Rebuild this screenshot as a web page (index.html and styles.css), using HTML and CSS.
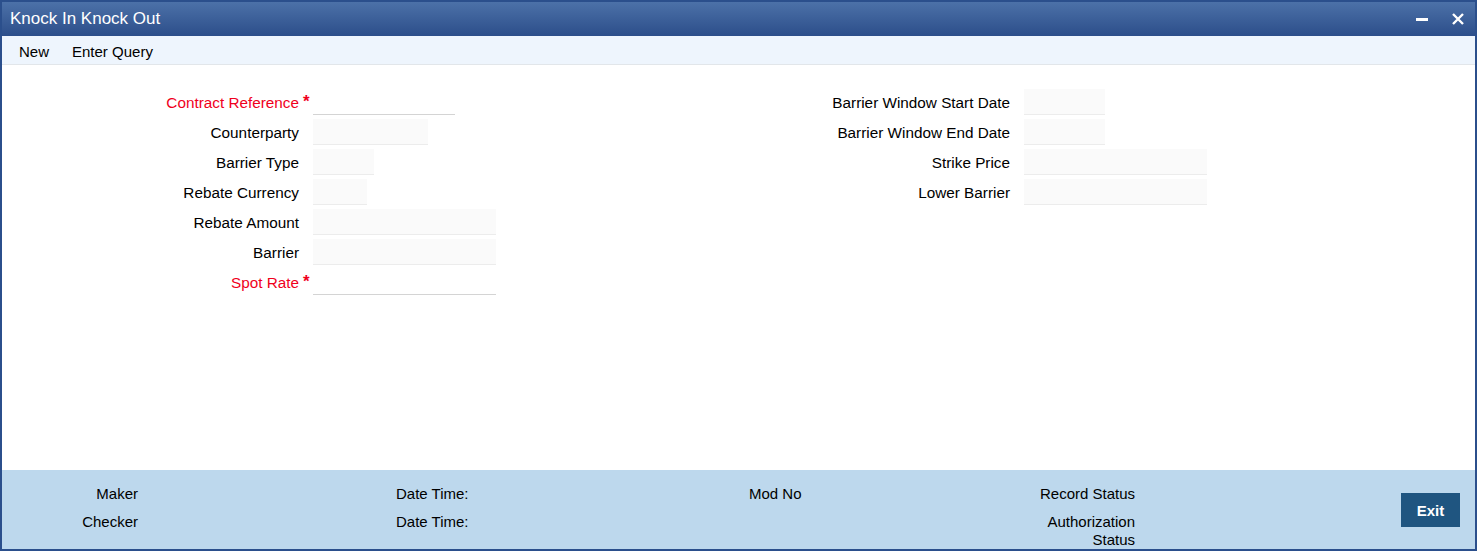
FILE: index.html
```html
<!DOCTYPE html>
<html>

	<head>
		<meta charset="UTF-8">
		<title>Knock In Knock Out</title>
		<link rel="stylesheet" href="styles.css">
	</head>

	<body>
		<div class="window">
			<div class="titlebar">
				<span class="title">Knock In Knock Out</span>
				<div class="win-btns">
					<svg width="14" height="14" viewBox="0 0 14 14"><rect x="1" y="6" width="12" height="3" fill="#fff"/></svg>
					<svg width="14" height="14" viewBox="0 0 14 14"><path d="M2 2 L12 12 M12 2 L2 12" stroke="#fff" stroke-width="2.4" fill="none"/></svg>
				</div>
			</div>

			<div class="toolbar">
				<span class="tool">New</span>
				<span class="tool">Enter Query</span>
			</div>

			<div class="form">
				<div class="col col-left">
					<div class="row">
						<label class="req">Contract Reference</label><span class="mark">*</span>
						<div class="field blank w142"></div>
					</div>
					<div class="row">
						<label>Counterparty</label><span class="mark"></span>
						<div class="field w115"></div>
					</div>
					<div class="row">
						<label>Barrier Type</label><span class="mark"></span>
						<div class="field w61"></div>
					</div>
					<div class="row">
						<label>Rebate Currency</label><span class="mark"></span>
						<div class="field w54"></div>
					</div>
					<div class="row">
						<label>Rebate Amount</label><span class="mark"></span>
						<div class="field w183"></div>
					</div>
					<div class="row">
						<label>Barrier</label><span class="mark"></span>
						<div class="field w183"></div>
					</div>
					<div class="row">
						<label class="req">Spot Rate</label><span class="mark">*</span>
						<div class="field blank w183"></div>
					</div>
				</div>

				<div class="col col-right">
					<div class="row">
						<label>Barrier Window Start Date</label><span class="mark"></span>
						<div class="field w81"></div>
					</div>
					<div class="row">
						<label>Barrier Window End Date</label><span class="mark"></span>
						<div class="field w81"></div>
					</div>
					<div class="row">
						<label>Strike Price</label><span class="mark"></span>
						<div class="field w183"></div>
					</div>
					<div class="row">
						<label>Lower Barrier</label><span class="mark"></span>
						<div class="field w183"></div>
					</div>
				</div>
			</div>

			<div class="footer">
				<div class="f-col f-maker">
					<span>Maker</span>
					<span>Checker</span>
				</div>
				<div class="f-col f-date">
					<span>Date Time:</span>
					<span>Date Time:</span>
				</div>
				<div class="f-col f-mod">
					<span>Mod No</span>
				</div>
				<div class="f-col f-status">
					<span>Record Status</span>
					<span>Authorization Status</span>
				</div>
				<button class="exit">Exit</button>
			</div>
		</div>
	</body>

</html>
```

FILE: styles.css
```css
* {
	margin: 0;
	box-sizing: border-box;
}

body {
	font-family: "Liberation Sans", Arial, sans-serif;
	font-size: 15px;
	color: #000;
	background: #fff;
}

.window {
	width: 1477px;
	height: 551px;
	border: 2px solid #2b4f8c;
	display: flex;
	flex-direction: column;
}

.titlebar {
	height: 34px;
	background: linear-gradient(#4c71a8, #2c4e8a);
	display: flex;
	align-items: center;
	justify-content: space-between;
	padding: 0 10px 0 8px;
}

.title {
	color: #fff;
	font-size: 17px;
}

.win-btns {
	display: flex;
	gap: 22px;
	align-items: center;
}

.toolbar {
	height: 29px;
	background: #eef5fd;
	border-bottom: 1px solid #e2e6ea;
	display: flex;
	align-items: center;
	padding: 2px 0 0 17px;
	gap: 23px;
}

.form {
	flex: 1;
	display: flex;
	padding-top: 24px;
}

.col-left {
	width: 698px;
}

.row {
	display: grid;
	grid-template-columns: 297px 14px auto;
	align-items: center;
	height: 30px;
	padding-bottom: 4px;
}

.col-right .row {
	grid-template-columns: 310px 14px auto;
}

.row label {
	text-align: right;
	padding-top: 2px;
	font-size: 15.3px;
}

.req {
	color: #f0001c;
}

.mark {
	color: #f0001c;
	font-size: 17px;
	font-weight: bold;
	padding-left: 4px;
	align-self: start;
	line-height: 18px;
	margin-top: 4px;
}

.field {
	height: 26px;
	background: #fafafa;
	border-bottom: 1px solid #ececec;
}

.field.blank {
	background: #fff;
	border-bottom: 1px solid #d4d4d4;
}

.w54 { width: 54px; }
.w61 { width: 61px; }
.w81 { width: 81px; }
.w115 { width: 115px; }
.w142 { width: 142px; }
.w183 { width: 183px; }

.footer {
	height: 79px;
	background: #bdd8ed;
	display: flex;
	padding-top: 15px;
	line-height: 18px;
}

.f-col {
	display: flex;
	flex-direction: column;
	gap: 10px;
}

.f-maker {
	width: 136px;
	text-align: right;
}

.f-date {
	margin-left: 258px;
	width: 353px;
}

.f-mod {
	width: 286px;
}

.f-status {
	width: 100px;
	text-align: right;
}

.exit {
	margin-left: auto;
	margin-right: 15px;
	margin-top: 8px;
	width: 59px;
	height: 34px;
	border: none;
	background: #1f5580;
	color: #fff;
	font-family: "Liberation Sans", Arial, sans-serif;
	font-size: 15px;
	font-weight: bold;
}
```
